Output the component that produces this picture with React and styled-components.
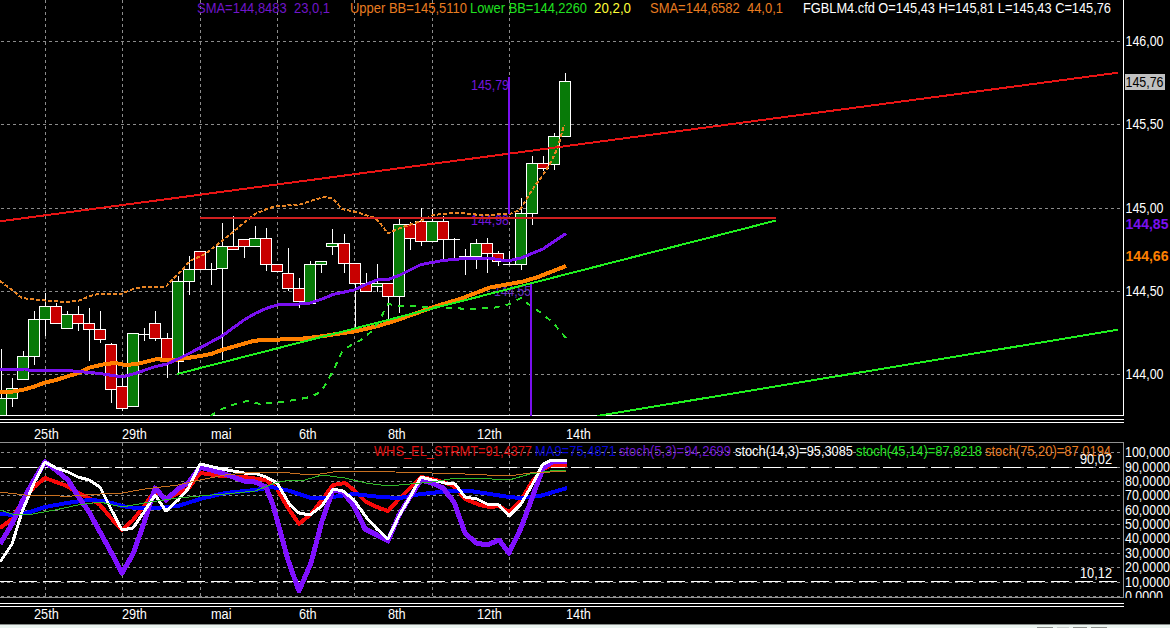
import React from "react";
import styled, { createGlobalStyle } from "styled-components";

const GlobalStyle = createGlobalStyle`
  * { box-sizing: border-box; }
  body { margin: 0; background: #000; overflow: hidden; }
`;

const Screen = styled.main`
  display: flex;
  flex-direction: column;
  width: 1170px;
  height: 628px;
  background: #000;
  color: #fff;
  font: 14px/15px "Liberation Sans", Arial, sans-serif;
  overflow: hidden;
`;

const Panel = styled.section`
  display: flex;
  flex: none;
  height: ${(p) => p.$height}px;
`;

const Plot = styled.svg`
  flex: none;
  width: 1124px;
  height: 100%;
  display: block;
  overflow: hidden;
  shape-rendering: crispEdges;
`;

const Axis = styled.svg`
  flex: none;
  width: 46px;
  height: 100%;
  display: block;
  overflow: hidden;
`;

const Label = styled.text`
  font-size: 14px;
  font-weight: ${(p) => (p.$bold ? 700 : 400)};
  fill: ${(p) => p.$color || "#fff"};
  white-space: pre;
`;

const GridLine = styled.line`
  stroke: #8c8c8c;
  stroke-width: 1;
  stroke-dasharray: 3 3;
`;

const LevelLine = styled.line`
  stroke: #fff;
  stroke-width: 1;
  stroke-dasharray: 18 6;
`;

const Curve = styled.polyline`
  fill: none;
  stroke: ${(p) => p.$color};
  stroke-width: ${(p) => p.$width};
  stroke-dasharray: ${(p) => p.$dash || "none"};
  stroke-linejoin: round;
`;

const Trend = styled.line`
  stroke: ${(p) => p.$color};
  stroke-width: 2;
`;

const Body = styled.rect`
  fill: ${(p) => (p.$up ? "#087a08" : "#c80000")};
  stroke: #fff;
  stroke-width: 1;
`;

const Wick = styled.line`
  stroke: #fff;
  stroke-width: 1;
`;

const TimeStrip = styled.div`
  flex: none;
  display: flex;
  flex-direction: column;
  height: 26px;
  padding-top: ${(p) => p.$top}px;
`;

const Rails = styled.div`
  flex: none;
  width: 1124px;
  height: 4px;
  border-top: 1px solid #fff;
  border-bottom: 1px solid #fff;
`;

const Dates = styled.div`
  display: grid;
  grid-template-columns: 88px 89px 88px 89px 89px 89px 60px;
  padding: ${(p) => p.$pad}px 0 0 34px;
  line-height: 15px;
`;

const DateLabel = styled.span`
  justify-self: start;
  transform: scaleX(0.91);
  transform-origin: left;
`;

const Footer = styled.footer`
  flex: none;
  display: flex;
  align-items: flex-end;
  gap: 4px;
  height: 4px;
  padding-left: 1037px;
  border-top: 1px solid #8a8f8c;
  background: #eaf3ef;
`;

const FooterTab = styled.span`
  width: ${(p) => p.$width}px;
  height: 1px;
  background: ${(p) => p.$color};
`;

const GRID_X = [45, 122, 200, 277, 354, 432, 509];
const STEP = 520 / 47;

// [slot, up, high, top, bottom, low]
const candles = [
  [-4, 1, 349, 398, 415, 415],
  [-3, 1, 378, 388, 398, 406],
  [-2, 1, 351, 356, 379, 379],
  [-1, 1, 311, 319, 356, 364],
  [0, 1, 293, 306, 319, 335],
  [1, 0, 303, 306, 323, 323],
  [2, 1, 311, 314, 328, 328],
  [3, 0, 306, 314, 323, 330],
  [4, 0, 308, 323, 329, 360],
  [5, 0, 311, 329, 339, 342],
  [6, 0, 343, 344, 389, 402],
  [7, 0, 377, 386, 408, 410],
  [8, 1, 333, 333, 406, 406],
  [9, 1, 328, 334, 334, 340],
  [10, 0, 311, 323, 338, 340],
  [11, 0, 333, 338, 358, 377],
  [12, 1, 276, 281, 361, 373],
  [13, 1, 256, 269, 281, 294],
  [14, 0, 251, 251, 269, 269],
  [15, 1, 263, 269, 269, 284],
  [16, 1, 223, 246, 268, 359],
  [17, 0, 216, 246, 249, 249],
  [18, 0, 239, 239, 246, 257],
  [19, 1, 226, 238, 246, 246],
  [20, 0, 228, 238, 264, 270],
  [21, 0, 264, 264, 271, 271],
  [22, 0, 248, 273, 288, 290],
  [23, 0, 278, 288, 301, 307],
  [24, 1, 261, 264, 303, 303],
  [25, 1, 261, 261, 264, 272],
  [26, 1, 229, 243, 246, 254],
  [27, 0, 234, 243, 263, 272],
  [28, 0, 263, 263, 283, 328],
  [29, 0, 273, 283, 291, 291],
  [30, 1, 264, 283, 286, 291],
  [31, 0, 283, 283, 296, 320],
  [32, 1, 219, 224, 296, 312],
  [33, 0, 222, 224, 238, 249],
  [34, 0, 208, 221, 241, 245],
  [35, 1, 209, 221, 241, 241],
  [36, 0, 216, 221, 239, 259],
  [37, 1, 238, 239, 239, 258],
  [38, 1, 249, 256, 256, 274],
  [39, 1, 239, 243, 256, 268],
  [40, 0, 238, 243, 253, 272],
  [41, 0, 251, 253, 261, 265],
  [42, 0, 251, 264, 264, 264],
  [43, 1, 198, 213, 264, 269],
  [44, 1, 156, 163, 213, 224],
  [45, 0, 156, 163, 168, 170],
  [46, 1, 133, 136, 164, 169],
  [47, 1, 73, 81, 136, 136],
];

const priceCurves = [
  {
    color: "#ff8000", width: 4,
    points: "0,392 10,392 22,390 33,387 45,382.5 56,380 78,373 90,367.5 105,364 116,363 125,365 137,364 157,359 167,360.5 178,359.5 200,356 211,354 222,350 253,341 262,340 299,339 317,337 343,333 357,331 380,325.5 400,319 435,306.5 460,299 490,287.5 523,281.5 538,277 566,266",
  },
  {
    color: "#7a10f0", width: 3,
    points: "0,369.5 25,369 30,370.5 70,370.7 100,373.5 122,377 135,373.5 155,366.7 167,364 178,359 190,353 211,342 222,336 233,328 244,320 255,313.5 266,308.5 277,305 299,304 310,303 322,299 333,294.5 354,290 366,284.5 377,280 388,279.5 400,275 421,264.5 443,260.5 465,258.5 488,258 508,261 521,258 543,249 566,233.5",
  },
  {
    color: "#e88424", width: 2, dash: "4 2",
    points: "0,281 8,287 22,298 38,300 65,302 78,301 90,296 100,293.5 122,293.5 133,289 145,287 166,286.5 180,272 190,261 205,254 218,244 233,232 245,222 255,214 268,208.5 275,206.5 300,204.5 315,199.5 325,197 333,198.5 342,209 358,212.5 375,218 380,223 388,233.5 400,228 421,221 433,215 457,212.5 480,215 510,214 520,210 532,190 545,172 552,160 558,147 564,125",
  },
  {
    color: "#28e028", width: 2, dash: "6 6",
    points: "210,416 222,409 235,404 247,401 260,404 277,402.5 295,400 310,397 321,392 328,380 334,369 343,350 353,344 361,340 372,331 380,320 385,309 388,304 400,306 421,306.5 445,307.5 468,309 495,307.5 510,304 521,298 532,307 543,314 554,324 566,338",
  },
];

const oscCurves = [
  {
    color: "#f80808", width: 4,
    points: "0,528 12,519 22,502 34,487 45,478 56,482 67,486 78,493 89,498 100,505 111,518 122,530 133,520 144,506 155,491 166,499 188,489 200,473 222,476 244,477 266,480 277,489 288,508 299,524 311,514 322,500 333,485 345,483 354,490 366,502 377,507 388,511 399,499 421,477 432,479 443,482 454,486 465,499 480,505 490,507 499,506 509,512 521,500 532,482 543,469 552,465 567,465.5",
  },
  {
    color: "#0000ff", width: 4,
    points: "0,514 15,515 30,512 45,507 67,503 89,500 105,501 122,506 135,508 155,508 178,506 200,499 225,493 255,490 272,487 290,491 311,498 325,498 354,494 380,497 400,498 421,494 450,491 470,491 490,494 509,497 521,498 540,496 567,488",
  },
  {
    color: "#8010ff", width: 5,
    points: "0,544 12,524 22,502 34,480 45,462 56,470 68,480 78,496 89,512 100,532 111,552 122,573 133,554 144,523 155,488 166,500 178,489 188,483 200,467 222,473 244,481 255,482 266,487 273,505 288,560 299,591 311,563 322,521 333,490 343,492 354,506 365,529 377,535 388,541 399,515 410,497 421,480 432,483 443,488 454,502 465,533 476,543 487,545 499,540 509,553 521,528 532,498 543,468 552,462 567,461",
  },
  {
    color: "#ffffff", width: 3,
    points: "0,562 12,544 22,512 34,483 45,462 56,468 68,472 78,477 89,480 100,487 111,509 122,530 133,528 144,512 155,495 166,511 178,500 188,489 200,464 222,469 244,473 257,474 266,477 277,483 290,505 299,513 310,515 322,506 333,489 343,491 354,500 366,517 377,529 388,539 399,516 410,497 421,477 432,480 445,483 455,484 465,497 477,499 487,504 499,505 509,516 521,504 532,485 543,464 552,460 567,460",
  },
  {
    color: "#30b828", width: 1,
    points: "0,510 15,515 33,514 55,510 78,505 100,502 122,507 150,502 178,498 200,496 225,494 255,491 275,483 290,480 305,480 322,475 345,478 366,483 388,486 410,484 432,482 450,479 475,478 509,480 530,474 550,471 566,470",
  },
  {
    color: "#c87020", width: 1,
    points: "0,492 25,495 50,495 65,496.5 100,494 122,493 145,489 178,485 200,480 225,475 255,472 280,472 300,474 320,474 340,471 366,471 395,472 432,473 465,474 509,476 530,473 550,472 566,471.5",
  },
];

// [text, x, width, colour]
const priceLegend = [
  ["SMA=144,8483  23,0,1", 197, 133, "#7016c8"],
  ["Upper BB=145,5110", 350, 117, "#e87c20"],
  ["Lower BB=144,2260", 470, 117, "#20e020"],
  ["20,2,0", 594, 37, "#ffff38"],
  ["SMA=144,6582  44,0,1", 650, 133, "#e87c20"],
  ["FGBLM4.cfd O=145,43 H=145,81 L=145,43 C=145,76", 803, 308, "#fff"],
];

const oscLegend = [
  ["WHS_EL_STRMT=91,4377", 374, 158, "#e01010"],
  ["MA9=75,4871", 535, 81, "#0808d8"],
  ["stoch(5,3)=94,2699", 619, 112, "#7018d0"],
  ["stoch(14,3)=95,3085", 735, 118, "#fff"],
  ["stoch(45,14)=87,8218", 856, 126, "#20e020"],
  ["stoch(75,20)=87,0194", 985, 126, "#e87c20"],
];

const priceScale = [["146,00", 41], ["145,50", 124], ["145,00", 208], ["144,50", 291], ["144,00", 374]];
const oscScale = [
  ["100,0000", 452], ["90,0000", 467], ["80,0000", 481], ["70,0000", 495], ["60,0000", 510], ["50,0000", 524],
  ["40,0000", 538], ["30,0000", 553], ["20,0000", 567], ["10,0000", 582], ["0,0000", 596],
];
const dates = ["25th", "29th", "mai", "6th", "8th", "12th", "14th"];

function Text({ x, y, w, color, bold, children }) {
  return (
    <Label x={x} y={y} textLength={w} lengthAdjust="spacingAndGlyphs" $color={color} $bold={bold}>
      {children}
    </Label>
  );
}

function Candle({ data: [slot, up, high, top, bottom, low] }) {
  const cx = Math.floor(45.3 + slot * STEP);
  return (
    <g>
      <Wick x1={cx + 0.5} x2={cx + 0.5} y1={high} y2={low + 1} />
      {top === bottom ? (
        <Wick x1={cx - 6} x2={cx + 6} y1={top + 0.5} y2={top + 0.5} />
      ) : (
        <Body x={cx - 5.5} y={top + 0.5} width={11} height={bottom - top} $up={up} />
      )}
    </g>
  );
}

function Curves({ items }) {
  return items.map((c) => (
    <Curve key={c.color} points={c.points} $color={c.color} $width={c.width} $dash={c.dash} />
  ));
}

function Legend({ items, y }) {
  return items.map(([t, x, w, color]) => (
    <Text key={t} x={x} y={y} w={w} color={color}>{t}</Text>
  ));
}

function Grid({ rows, top, bottom }) {
  return (
    <g>
      {rows.map(([t, y]) => (
        <GridLine key={t} x1={1} x2={1120} y1={y + 0.5} y2={y + 0.5} />
      ))}
      {GRID_X.map((x) => (
        <GridLine key={x} x1={x + 0.5} x2={x + 0.5} y1={top} y2={bottom} />
      ))}
    </g>
  );
}

function PricePanel() {
  return (
    <Panel $height={416}>
      <Plot viewBox="0 0 1124 416">
        <Grid rows={priceScale} top={0} bottom={415} />
        <Wick x1={0} x2={1124} y1={415.5} y2={415.5} />
        <Wick x1={1123.5} x2={1123.5} y1={0} y2={416} />
        <Text x={471} y={90} w={38} color="#7216dc">145,79</Text>
        <Text x={471} y={225} w={38} color="#7216dc">144,98</Text>
        <Text x={494} y={296} w={37} color="#6a30c0">144,55</Text>
        {candles.map((c) => <Candle key={c[0]} data={c} />)}
        <Curves items={priceCurves} />
        <Trend x1={0} y1={221.3} x2={1118} y2={72.7} $color="#e81414" />
        <Trend x1={200} y1={218} x2={776} y2={218} $color="#d02020" />
        <Trend x1={177} y1={374} x2={776} y2={220.5} $color="#20f020" />
        <Trend x1={597} y1={416} x2={1118} y2={329.7} $color="#20f020" />
        <Trend x1={509} y1={77} x2={509} y2={214} $color="#7a10f0" />
        <Trend x1={531} y1={284} x2={531} y2={416} $color="#7a10f0" />
        <Legend items={priceLegend} y={13} />
      </Plot>
      <Axis viewBox="0 0 46 416">
        {priceScale.map(([t, y]) => <Text key={t} x={1.5} y={y + 5} w={38}>{t}</Text>)}
        <rect x={1} y={74} width={40} height={16} fill="#c0c0c0" />
        <Text x={1.5} y={87} w={38} color="#000">145,76</Text>
        <Text x={1.5} y={229} w={43} color="#7a10f0" bold>144,85</Text>
        <Text x={1.5} y={261} w={43} color="#ff8000" bold>144,66</Text>
      </Axis>
    </Panel>
  );
}

function OscillatorPanel() {
  return (
    <Panel $height={156}>
      <Plot viewBox="0 442 1124 156">
        <Grid rows={oscScale} top={443} bottom={597} />
        <rect x={-2} y={442.5} width={1125.5} height={155} fill="none" stroke="#909090" />
        <LevelLine x1={-5} x2={1120} y1={467.5} y2={467.5} />
        <LevelLine x1={-5} x2={1120} y1={581.5} y2={581.5} />
        <Legend items={oscLegend} y={456} />
        <Curves items={oscCurves} />
        <Text x={1080} y={464} w={32}>90,02</Text>
        <Text x={1080} y={578} w={32}>10,12</Text>
      </Plot>
      <Axis viewBox="0 442 46 156">
        {oscScale.map(([t, y]) => <Text key={t} x={1} y={y + 5} w={t.length * 7 - 4}>{t}</Text>)}
      </Axis>
    </Panel>
  );
}

function TimeAxis({ top, pad }) {
  return (
    <TimeStrip $top={top}>
      <Rails />
      <Dates $pad={pad}>
        {dates.map((d) => <DateLabel key={d}>{d}</DateLabel>)}
      </Dates>
    </TimeStrip>
  );
}

export default function App() {
  return (
    <Screen>
      <GlobalStyle />
      <PricePanel />
      <TimeAxis top={3} pad={4} />
      <OscillatorPanel />
      <TimeAxis top={5} pad={0} />
      <Footer>
        <FooterTab $width={16} $color="#8a8f8c" />
        <FooterTab $width={12} $color="#c8cecb" />
        <FooterTab $width={14} $color="#8a8f8c" />
        <FooterTab $width={16} $color="#8a8f8c" />
      </Footer>
    </Screen>
  );
}
